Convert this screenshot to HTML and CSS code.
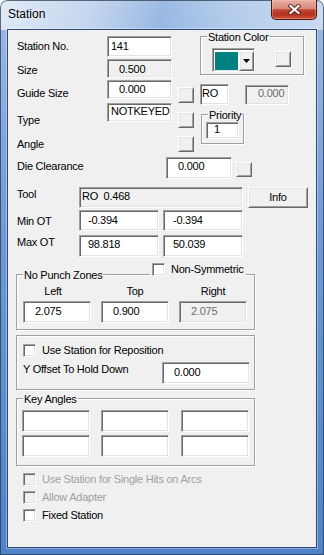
FILE: index.html
```html
<!DOCTYPE html>
<html>
<head>
<meta charset="utf-8">
<title>Station</title>
<link rel="stylesheet" href="styles.css">
</head>
<body>
<div class="window">
  <div class="titlebar">
    <span class="title">Station</span>
    <div class="close-btn">
      <svg width="13" height="11" viewBox="0 0 13 11">
        <path d="M2.5 2 L10.5 9 M10.5 2 L2.5 9" stroke="#3b1510" stroke-opacity=".8" stroke-width="4.2" stroke-linecap="square" fill="none"/>
        <path d="M2.5 2 L10.5 9 M10.5 2 L2.5 9" stroke="#fff" stroke-width="2.2" stroke-linecap="square" fill="none"/>
      </svg>
    </div>
  </div>
  <div class="client">
    <div class="top">
      <div class="leftcol">
        <div class="frow row-stno">
          <span class="lbl">Station No.</span>
          <div class="edit f-stno">141</div>
        </div>
        <div class="frow row-size">
          <span class="lbl">Size</span>
          <div class="edit ro f-size">0.500</div>
        </div>
        <div class="frow row-guide">
          <span class="lbl">Guide Size</span>
          <div class="edit f-guide">0.000</div>
          <div class="btn3d small"></div>
        </div>
        <div class="frow row-type">
          <span class="lbl">Type</span>
          <div class="edit f-type">NOTKEYED</div>
          <div class="btn3d small"></div>
        </div>
        <div class="frow row-angle">
          <span class="lbl">Angle</span>
          <div class="btn3d small"></div>
        </div>
      </div>
      <div class="rightcol">
        <div class="group grp-color">
          <span class="legend">Station Color</span>
          <div class="combo">
            <div class="swatch"></div>
            <div class="drop btn3d">
              <svg width="7" height="4" viewBox="0 0 7 4"><path d="M0 0 H7 L3.5 4 Z" fill="#000"/></svg>
            </div>
          </div>
          <div class="btn3d color-btn"></div>
        </div>
        <div class="frow row-ro">
          <div class="edit f-ro">RO</div>
          <div class="edit dis f-rodis">0.000</div>
        </div>
        <div class="group grp-prio">
          <span class="legend">Priority</span>
          <div class="edit f-prio">1</div>
        </div>
      </div>
    </div>

    <div class="frow row-die">
      <span class="lbl">Die Clearance</span>
      <div class="edit f-die">0.000</div>
      <div class="btn3d die-btn"></div>
    </div>

    <div class="frow row-tool">
      <span class="lbl">Tool</span>
      <div class="edit ro f-tool">RO  0.468</div>
      <div class="btn3d info-btn">Info</div>
    </div>
    <div class="frow row-min">
      <span class="lbl">Min OT</span>
      <div class="edit f-ot">-0.394</div>
      <div class="edit f-ot f-ot2">-0.394</div>
    </div>
    <div class="frow row-max">
      <span class="lbl">Max OT</span>
      <div class="edit f-ot">98.818</div>
      <div class="edit f-ot f-ot2">50.039</div>
    </div>

    <div class="group grp-npz">
      <span class="legend">No Punch Zones</span>
      <div class="ns">
        <div class="chk"></div>
        <span class="chk-lbl">Non-Symmetric</span>
      </div>
      <div class="npz-grid">
        <span class="npz-head h-left">Left</span>
        <span class="npz-head">Top</span>
        <span class="npz-head">Right</span>
      </div>
      <div class="npz-grid npz-fields">
        <div class="edit f-npz">2.075</div>
        <div class="edit f-npz">0.900</div>
        <div class="edit dis f-npz">2.075</div>
      </div>
    </div>

    <div class="group grp-repo">
      <div class="crow">
        <div class="chk"></div>
        <span class="chk-lbl">Use Station for Reposition</span>
      </div>
      <div class="frow row-yoff">
        <span class="lbl">Y Offset To Hold Down</span>
        <div class="edit f-yoff">0.000</div>
      </div>
    </div>

    <div class="group grp-key">
      <span class="legend">Key Angles</span>
      <div class="key-grid">
        <div class="edit f-key"></div>
        <div class="edit f-key"></div>
        <div class="edit f-key"></div>
        <div class="edit f-key"></div>
        <div class="edit f-key"></div>
        <div class="edit f-key"></div>
      </div>
    </div>

    <div class="checks">
      <div class="crow disabled">
        <div class="chk dis"></div>
        <span class="chk-lbl">Use Station for Single Hits on Arcs</span>
      </div>
      <div class="crow disabled">
        <div class="chk dis"></div>
        <span class="chk-lbl">Allow Adapter</span>
      </div>
      <div class="crow">
        <div class="chk"></div>
        <span class="chk-lbl">Fixed Station</span>
      </div>
    </div>
  </div>
</div>
</body>
</html>
```

FILE: styles.css
```css
* { box-sizing: border-box; margin: 0; padding: 0; }
html, body { width: 324px; height: 555px; overflow: hidden; background: #fff; }
body {
  font-family: "Liberation Sans", Arial, sans-serif;
  font-size: 11px;
  line-height: 13px;
  letter-spacing: -0.25px;
  color: #000;
}

/* ---------- window frame ---------- */
.window {
  width: 324px;
  height: 555px;
  padding: 0 7px 7px;
  border-radius: 7px 7px 0 0;
  display: flex;
  flex-direction: column;
  background:
    linear-gradient(100deg, rgba(236,242,250,.85) 0%, rgba(214,227,243,.7) 28%, rgba(120,160,215,0) 50%, rgba(205,222,242,.5) 70%, rgba(222,233,247,.7) 100%) top left / 100% 30px no-repeat,
    linear-gradient(180deg, #9dbbe4 0%, #6f9bd7 40%, #4f82c8 100%);
  box-shadow: inset 0 0 0 1px rgba(40,50,70,.7);
}
.titlebar {
  height: 29px;
  flex: none;
  display: flex;
  justify-content: space-between;
  align-items: flex-start;
}
.title {
  font-size: 12px;
  line-height: 15px;
  letter-spacing: 0;
  margin: 7px 0 0 1px;
  color: #000;
  text-shadow: 0 0 6px rgba(255,255,255,.9);
}
.close-btn {
  width: 46px;
  height: 20px;
  border: 1px solid #4a1a14;
  border-top: none;
  border-radius: 0 0 5px 5px;
  background: linear-gradient(#e7ada1 0%, #d98979 45%, #c14632 52%, #b5301f 78%, #d2593c 100%);
  box-shadow: inset 0 0 0 1px rgba(255,205,195,.35);
  display: flex;
  align-items: center;
  justify-content: center;
}
.client {
  flex: 1;
  background: #f0f0f0;
  border: 1px solid #2b4a75;
  box-shadow: 0 0 0 1px rgba(255,255,255,.35);
  display: flex;
  flex-direction: column;
}

/* ---------- common controls ---------- */
.frow { display: flex; align-items: flex-start; flex: none; }
.lbl { white-space: nowrap; flex: none; }

.edit {
  flex: none;
  background: #fff;
  border: 1px solid;
  border-color: #a0a0a0 #fff #fff #a0a0a0;
  box-shadow: inset 1px 1px 0 #696969, inset -1px -1px 0 #e3e3e3;
  white-space: pre;
  overflow: hidden;
}
.edit.ro { background: #f0f0f0; }
.edit.dis { background: #f0f0f0; color: #6d6d6d; }

.btn3d {
  flex: none;
  background: #f0f0f0;
  border: 1px solid;
  border-color: #fff #696969 #696969 #fff;
  box-shadow: inset 1px 1px 0 #e3e3e3, inset -1px -1px 0 #a0a0a0;
}

.group {
  flex: none;
  position: relative;
  border: 1px solid #a0a0a0;
  box-shadow: inset 1px 1px 0 #fff, 1px 1px 0 #fff;
}
.legend {
  position: absolute;
  top: -6px;
  left: 6px;
  padding: 0 1px;
  background: #f0f0f0;
  white-space: nowrap;
}

.chk {
  flex: none;
  width: 13px;
  height: 13px;
  background: #fff;
  border: 1px solid;
  border-color: #a0a0a0 #fff #fff #a0a0a0;
  box-shadow: inset 1px 1px 0 #696969, inset -1px -1px 0 #e3e3e3;
}
.chk.dis { background: #f0f0f0; }
.crow { display: flex; align-items: flex-start; height: 13px; flex: none; }
.chk-lbl { margin-left: 6px; white-space: nowrap; }
.crow.disabled .chk-lbl { color: #a0a0a0; }

/* ---------- top section ---------- */
.top { display: flex; height: 127px; flex: none; }
.leftcol { width: 192px; display: flex; flex-direction: column; flex: none; }
.top .lbl { width: 90px; margin-left: 9px; }
.btn3d.small { width: 16px; height: 16px; margin-left: 6px; }

.f-stno, .f-size, .f-guide, .f-type { width: 65px; }

.row-stno { margin-top: 6px; height: 21px; }
.row-stno .lbl { margin-top: 4px; }
.f-stno { height: 21px; padding: 3px 0 0 3px; }

.row-size { margin-top: 2px; height: 19px; }
.row-size .lbl { margin-top: 5px; }
.f-size { height: 19px; padding: 3px 0 0 11px; }

.row-guide { margin-top: 2px; height: 19px; }
.row-guide .lbl { margin-top: 7px; }
.row-guide .btn3d { margin-top: 7px; }
.f-guide { height: 19px; padding: 2px 0 0 11px; }

.row-type { margin-top: 4px; height: 19px; }
.row-type .lbl { margin-top: 11px; }
.row-type .btn3d { margin-top: 9px; }
.f-type { height: 19px; padding: 1px 0 0 3px; }

.row-angle { margin-top: 14px; height: 16px; }
.row-angle .lbl { margin-top: 2px; }
.row-angle .btn3d { margin-left: 71px; }

.rightcol { display: flex; flex-direction: column; align-items: flex-start; }
.grp-color {
  margin-top: 6px;
  width: 104px;
  height: 39px;
  padding: 11px 0 0 11px;
  display: flex;
  align-items: flex-start;
}
.combo {
  flex: none;
  width: 43px;
  height: 24px;
  padding: 1px;
  display: flex;
  align-items: flex-start;
  background: #fff;
  border: 1px solid;
  border-color: #a0a0a0 #fff #fff #a0a0a0;
  box-shadow: inset 1px 1px 0 #696969, inset -1px -1px 0 #e3e3e3;
}
.swatch {
  width: 23px;
  height: 18px;
  margin: 2px 0 0 1px;
  background: #008080;
  flex: none;
}
.drop {
  width: 15px;
  height: 20px;
  margin: 1px 0 0 1px;
  display: flex;
  align-items: center;
  justify-content: center;
}
.color-btn { width: 16px; height: 16px; margin: 3px 0 0 20px; }

.row-ro { margin-top: 9px; }
.f-ro { width: 29px; height: 21px; padding: 2px 0 0 1px; }
.f-rodis { width: 44px; height: 20px; margin: 1px 0 0 16px; padding: 1px 0 0 12px; }

.grp-prio {
  margin: 9px 0 0 1px;
  width: 43px;
  height: 30px;
  padding: 7px 0 0 4px;
}
.f-prio { width: 33px; height: 17px; padding: 0 0 0 7px; }

/* ---------- die / tool / OT ---------- */
.row-die { height: 22px; }
.row-die .lbl { width: 149px; margin: 3px 0 0 9px; }
.f-die { width: 66px; height: 22px; padding: 2px 0 0 11px; }
.die-btn { width: 16px; height: 15px; margin: 5px 0 0 4px; }

.row-tool .lbl, .row-min .lbl, .row-max .lbl { width: 62px; margin-left: 9px; }
.row-tool { margin-top: 8px; height: 21px; }
.row-tool .lbl { margin-top: 1px; }
.f-tool { width: 164px; height: 21px; padding: 2px 0 0 2px; }
.info-btn {
  width: 60px;
  height: 21px;
  margin-left: 5px;
  text-align: center;
  padding-top: 3px;
}
.row-min { margin-top: 2px; height: 21px; }
.row-min .lbl { margin-top: 5px; }
.f-ot { width: 80px; height: 21px; padding: 3px 0 0 8px; }
.f-ot2 { margin-left: 4px; padding-left: 9px; }
.row-max { margin-top: 4px; height: 22px; }
.row-max .lbl { margin-top: 1px; }
.row-max .f-ot { height: 22px; padding-top: 2px; }

/* ---------- No Punch Zones ---------- */
.grp-npz {
  margin: 17px 0 0 8px;
  width: 239px;
  height: 56px;
  padding: 10px 0 0 6px;
}
.ns {
  position: absolute;
  left: 133px;
  top: -12px;
  display: flex;
  align-items: flex-start;
  padding: 0 2px;
  background: #f0f0f0;
}
.npz-grid {
  display: grid;
  grid-template-columns: 68px 68px 68px;
  column-gap: 10px;
}
.npz-head { text-align: center; }
.npz-head.h-left { padding-right: 8px; }
.npz-fields { margin-top: 3px; }
.f-npz { height: 22px; padding: 3px 0 0 11px; }

/* ---------- Reposition ---------- */
.grp-repo {
  margin: 5px 0 0 8px;
  width: 239px;
  height: 55px;
  padding: 8px 0 0 6px;
}
.row-yoff { margin-top: 5px; }
.row-yoff .lbl { width: 139px; margin-top: 1px; }
.f-yoff { width: 88px; height: 22px; padding: 3px 0 0 11px; }

/* ---------- Key Angles ---------- */
.grp-key {
  margin: 8px 0 0 8px;
  width: 239px;
  height: 68px;
  padding: 11px 0 0 5px;
}
.key-grid {
  display: grid;
  grid-template-columns: 79px 80px 68px;
  row-gap: 3px;
}
.f-key { width: 68px; height: 22px; }

/* ---------- bottom checks ---------- */
.checks {
  margin: 7px 0 0 15px;
  display: flex;
  flex-direction: column;
  gap: 5px;
}
```
